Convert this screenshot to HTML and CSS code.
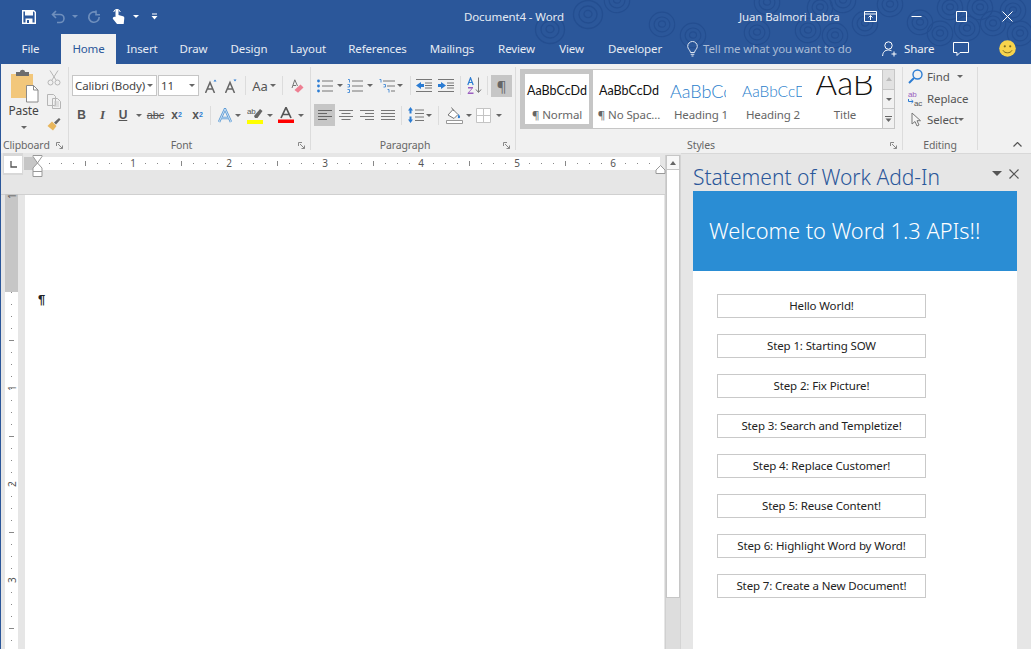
FILE: index.html
```html
<!DOCTYPE html>
<html lang="en">
<head>
    <meta charset="UTF-8">
    <title>Document4 - Word</title>
    <link rel="stylesheet" href="styles.css">
</head>
<body>
<svg width="0" height="0" class="defs">
    <symbol id="rings" viewBox="-16 -16 32 32">
        <path d="M-4 0a4 3.6 0 1 0 8 0a4 3.6 0 1 0-8 0M-9 1a9 8.5 0 1 0 18-1a9 8.5 0 1 0-18 1M-14.500 0a14.500 14 0 1 0 29 1a14.500 14 0 1 0-29-1" fill="none" stroke="#244e90" stroke-width="1.300"/>
    </symbol>
</svg>
<header class="top">
    <svg class="pattern" width="1031" height="64">
        <use href="#rings" x="572" y="-2" width="32" height="32"/>
        <use href="#rings" x="534" y="13" width="32" height="32"/>
        <use href="#rings" x="648" y="10" width="28" height="28"/>
        <use href="#rings" x="679" y="21" width="28" height="28"/>
        <use href="#rings" x="743" y="18" width="28" height="28"/>
        <use href="#rings" x="603" y="-14" width="28" height="28"/>
        <use href="#rings" x="753" y="-12" width="28" height="28"/>
        <use href="#rings" x="794" y="16" width="28" height="28"/>
        <use href="#rings" x="821" y="21" width="28" height="28"/>
        <use href="#rings" x="806" y="-7" width="28" height="28"/>
        <use href="#rings" x="829" y="-14" width="28" height="28"/>
        <use href="#rings" x="851" y="9" width="28" height="28"/>
        <use href="#rings" x="906" y="8" width="28" height="28"/>
        <use href="#rings" x="926" y="19" width="28" height="28"/>
        <use href="#rings" x="953" y="14" width="28" height="28"/>
        <use href="#rings" x="979" y="9" width="28" height="28"/>
        <use href="#rings" x="999" y="-4" width="28" height="28"/>
        <use href="#rings" x="966" y="-7" width="28" height="28"/>
        <use href="#rings" x="936" y="-7" width="28" height="28"/>
        <use href="#rings" x="1006" y="19" width="28" height="28"/>
        <use href="#rings" x="876" y="-10" width="28" height="28"/>
    </svg>
    <div class="titlebar">
        <div class="qat">
            <svg class="save" width="14" height="14" viewBox="0 0 14 14"><path d="M.7.700h11l1.600 1.600v11H.7z" fill="none" stroke="#fff" stroke-width="1.400"/><path d="M3 1h8v4.500H3zM3.500 8.500h7V13h-7z" fill="#fff"/><path d="M5 10h2v3H5z" fill="#2b579a"/></svg>
            <svg class="undo" width="15" height="14" viewBox="0 0 15 14"><path d="M5 1 1.500 4.500 5 8M2 4.500h7a4 4 0 0 1 0 8H6" fill="none" stroke="#6f8fbd" stroke-width="1.600"/></svg>
            <i class="drop dim undo-drop"></i>
            <svg class="redo" width="14" height="14" viewBox="0 0 14 14"><path d="M9.500 2.500a5.200 5.200 0 1 0 2.700 4.500M9 .5v4.200h4" fill="none" stroke="#6f8fbd" stroke-width="1.600"/></svg>
            <svg class="touch" width="13" height="17" viewBox="0 0 13 17"><path d="M3.500 9V3a1.500 1.500 0 0 1 3 0v4l4.500 1.200c1 .3 1.400 1 1.300 2l-.6 5.800H5L1 11c-.9-1.300.8-2.700 2.500-2z" fill="#fff"/><path d="M1.700 4a3.400 3.400 0 0 1 6.600 0" fill="none" stroke="#fff"/></svg>
            <i class="drop light touch-drop"></i>
            <svg class="custom" width="7" height="7" viewBox="0 0 7 7"><path d="M1 .5h5v1H1zM.5 3h6L3.500 6.500z" fill="#fff"/></svg>
        </div>
        <div class="doc-title">Document4 - Word</div>
        <div class="user">Juan Balmori Labra</div>
        <div class="caption">
            <svg class="cap cap-display" width="13" height="11" viewBox="0 0 13 11"><path d="M.5.500h12v10H.5zM.5 3h12M6.500 9V4.500M4.500 6.500l2-2 2 2" fill="none" stroke="#fff"/></svg>
            <svg class="cap cap-min" width="11" height="11" viewBox="0 0 11 11"><path d="M.5 5.500h10" stroke="#fff"/></svg>
            <svg class="cap cap-max" width="11" height="11" viewBox="0 0 11 11"><path d="M.5.500h10v10H.5z" fill="none" stroke="#fff"/></svg>
            <svg class="cap cap-close" width="11" height="11" viewBox="0 0 11 11"><path d="M.5.500l10 10M10.500.500l-10 10" stroke="#fff"/></svg>
        </div>
    </div>
    <nav class="tabs">
        <span class="tab tab-file">File</span>
        <span class="tab tab-home">Home</span>
        <span class="tab tab-insert">Insert</span>
        <span class="tab tab-draw">Draw</span>
        <span class="tab tab-design">Design</span>
        <span class="tab tab-layout">Layout</span>
        <span class="tab tab-refs">References</span>
        <span class="tab tab-mail">Mailings</span>
        <span class="tab tab-review">Review</span>
        <span class="tab tab-view">View</span>
        <span class="tab tab-dev">Developer</span>
        <svg class="bulb" width="11" height="16" viewBox="0 0 11 16"><path d="M3.500 11.500C3.300 9 .7 8.200.7 5.300a4.800 4.800 0 0 1 9.600 0c0 2.900-2.600 3.700-2.800 6.200zM3.700 13.300h3.600M4.500 15h2" fill="none" stroke="#dfe6f1"/></svg>
        <span class="tell">Tell me what you want to do</span>
        <svg class="share-icon" width="16" height="16" viewBox="0 0 16 16"><circle cx="6.500" cy="4.500" r="3.700" fill="none" stroke="#fff"/><path d="M.6 15c.2-3.600 2-6 5.900-6 1.200 0 2.200.3 3 .8M12 10.500v5M9.500 13h5" fill="none" stroke="#fff"/></svg>
        <span class="share">Share</span>
        <svg class="comment" width="16" height="14" viewBox="0 0 16 14"><path d="M.5.500h15v10H7l-3 3v-3H.5z" fill="none" stroke="#fff"/></svg>
        <svg class="smiley" width="17" height="17" viewBox="0 0 17 17"><circle cx="8.500" cy="8.500" r="8.300" fill="#f7d44c"/><circle cx="5.800" cy="6.300" r="1.100" fill="#7a6a1e"/><circle cx="11.200" cy="6.300" r="1.100" fill="#7a6a1e"/><path d="M4 10.300c1.500 3.300 7.500 3.300 9 0" fill="none" stroke="#7a6a1e"/></svg>
    </nav>
</header>

<section class="ribbon">
    <div class="group g-clip">
        <div class="clip-body">
            <div class="paste">
                <svg width="29" height="34" viewBox="0 0 29 34"><path d="M1 5h22v24H1z" fill="#f2c77b"/><path d="M6 5V3h4c0-3 5-3 5 0h4v4H6z" fill="#6d6d6d"/><path d="M16.500 16.500h7l4.500 4.500v12H16.500z" fill="#fff" stroke="#8a8a8a"/><path d="M23.500 16.500V21H28" fill="none" stroke="#8a8a8a"/></svg>
                <span class="paste-label">Paste</span>
                <i class="drop"></i>
            </div>
            <div class="clip-small">
                <svg width="14" height="16" viewBox="0 0 14 16"><path d="M3 .5 9 10M11 .5 5 10" stroke="#b5b5b5" fill="none"/><circle cx="3.500" cy="12.500" r="2.500" fill="none" stroke="#b5b5b5"/><circle cx="10.500" cy="12.500" r="2.500" fill="none" stroke="#b5b5b5"/></svg>
                <svg width="14" height="15" viewBox="0 0 14 15"><path d="M.5.500h6l2 2v9h-8zM5.500 4.500h5l3 3v7h-8z" fill="#f1f1f1" stroke="#b5b5b5"/><path d="M7 8h5M7 10h5M7 12h5" stroke="#c9c9c9"/></svg>
                <svg width="14" height="14" viewBox="0 0 14 14"><path d="M.5 9 5 4.500l4.500 4.500L6 13.500z" fill="#e8b65b"/><path d="M7 5.500 12 1l1.500 1.500L9 7.500z" fill="#666"/></svg>
            </div>
        </div>
        <div class="glabel glabel-clip">Clipboard<svg class="launch" width="7" height="7" viewBox="0 0 7 7"><path d="M.5 4V.5H4M2 2l4.500 4.500M6.500 3.500v3h-3" fill="none" stroke="#888"/></svg></div>
    </div>

    <div class="group g-font">
        <div class="row">
            <div class="combo combo-font ml3"><span>Calibri (Body)</span><i class="drop"></i></div>
            <div class="combo combo-size ml1"><span>11</span><i class="drop"></i></div>
            <span class="t w20 ml2"><svg width="12" height="14" viewBox="0 0 12 14"><path d="M.5 14 5 3.500 9.500 14M2.300 10h5.400" fill="none" stroke="#666" stroke-width="1.500"/><path d="M8.500 2.500 10 .5l1.500 2z" fill="#2b7cd3"/></svg></span>
            <span class="t w20"><svg width="12" height="14" viewBox="0 0 12 14"><path d="M.5 14 5 3.500 9.500 14M2.300 10h5.400" fill="none" stroke="#666" stroke-width="1.500"/><path d="M8.500.5 10 2.500l1.500-2z" fill="#2b7cd3"/></svg></span>
            <span class="t w8"><i class="vsep"></i></span>
            <span class="t w20 ml1 aa">Aa</span>
            <span class="t w6"><i class="drop"></i></span>
            <span class="t w12"><i class="vsep"></i></span>
            <span class="t w18"><svg width="13" height="14" viewBox="0 0 13 14"><path d="M1 9 3.800.8 6.500 7M2 6.500h3" fill="none" stroke="#777"/><path d="M3.500 11 9.500 5.500l3 3L7 13.800z" fill="#ee7f92"/></svg></span>
        </div>
        <div class="row row2">
            <span class="t w21 ml2 fmt b">B</span>
            <span class="t w21 fmt i">I</span>
            <span class="t w20 fmt u">U</span>
            <span class="t w12"><i class="drop"></i></span>
            <span class="t w21 fmt abc">abc</span>
            <span class="t w21 fmt b">x<sub>2</sub></span>
            <span class="t w21 fmt b">x<sup>2</sup></span>
            <span class="t w4"><i class="vsep"></i></span>
            <span class="t w20 ml3"><svg width="14" height="15" viewBox="0 0 14 15"><path d="M1 14 7 1l6 13M3.500 10h7" fill="none" stroke="#5b9bd5" stroke-width="2.500"/><path d="M1 14 7 1l6 13M3.500 10h7" fill="none" stroke="#e4effa" stroke-width=".8"/></svg></span>
            <span class="t w6"><i class="drop"></i></span>
            <span class="t w20 ml4"><svg width="16" height="17" viewBox="0 0 16 17"><text x="0" y="7" class="hl-ab">ab</text><path d="M7 9 13 2l2.500 2-5 7H8z" fill="#666"/><path d="M0 13h16v4H0z" fill="#ffff00"/></svg></span>
            <span class="t w10"><i class="drop"></i></span>
            <span class="t w20 ml1"><svg width="16" height="16" viewBox="0 0 16 16"><path d="M3 11 8 .5 13 11M5 7.500h6" fill="none" stroke="#555" stroke-width="1.700"/><path d="M0 12.500h16V16H0z" fill="#f00"/></svg></span>
            <span class="t w10"><i class="drop"></i></span>
        </div>
        <div class="glabel glabel-off">Font<svg class="launch" width="7" height="7" viewBox="0 0 7 7"><path d="M.5 4V.5H4M2 2l4.500 4.500M6.500 3.500v3h-3" fill="none" stroke="#888"/></svg></div>
    </div>

    <div class="group g-para">
        <div class="row">
            <span class="t w18 ml5"><svg width="16" height="14" viewBox="0 0 16 14"><path d="M5 2h11M5 7h11M5 12h11" stroke="#777"/><circle cx="1.500" cy="2" r="1.400" fill="#2b7cd3"/><circle cx="1.500" cy="7" r="1.400" fill="#2b7cd3"/><circle cx="1.500" cy="12" r="1.400" fill="#2b7cd3"/></svg></span>
            <span class="t w12"><i class="drop"></i></span>
            <span class="t w16 ml1"><svg width="16" height="14" viewBox="0 0 16 14"><path d="M5 2h11M5 7h11M5 12h11" stroke="#777"/><path d="M1 .5h1.500v3M.5 5.500h2V8h-2M.5 10.500h2v3h-2" fill="none" stroke="#2b7cd3" stroke-width=".8"/></svg></span>
            <span class="t w14"><i class="drop"></i></span>
            <span class="t w18 ml1"><svg width="16" height="14" viewBox="0 0 16 14"><path d="M4 2h12M8 7h8M12 12h4" stroke="#777"/><path d="M.5.500h1.500v3M4.500 5.500h2V8h-2M8.500 10.500h1.500v3" fill="none" stroke="#2b7cd3" stroke-width=".8"/></svg></span>
            <span class="t w8"><i class="drop"></i></span>
            <span class="t w10 ml1"><i class="vsep"></i></span>
            <span class="t w18"><svg width="16" height="13" viewBox="0 0 16 13"><path d="M0 .5h16M9 4h7M9 6.500h7M9 9h7M0 12.500h16" stroke="#777"/><path d="M0 6.500 5 3v2h3v3H5v2z" fill="#2b7cd3"/></svg></span>
            <span class="t w18 ml4"><svg width="16" height="13" viewBox="0 0 16 13"><path d="M0 .5h16M9 4h7M9 6.500h7M9 9h7M0 12.500h16" stroke="#777"/><path d="M8 6.500 3 3v2H0v3h3v2z" fill="#2b7cd3"/></svg></span>
            <span class="t w10"><i class="vsep"></i></span>
            <span class="t w18"><svg width="15" height="17" viewBox="0 0 15 17"><path d="M.8 8 3.500.8 6.200 8M1.800 5.500h3.400" fill="none" stroke="#2b7cd3" stroke-width="1.200"/><path d="M1 10h5v1L2 15.500h4.500V17H.7v-1l4-4.500H1z" fill="#9b5fc0"/><path d="M11.500.5V15M9 12.500l2.500 3 2.500-3" fill="none" stroke="#777"/></svg></span>
            <span class="t w8"><i class="vsep"></i></span>
            <span class="t w21 on pil">¶</span>
        </div>
        <div class="row row2">
            <span class="t w21 ml3 on"><svg width="14" height="10" viewBox="0 0 14 10"><path d="M0 .5h14M0 3.500h9M0 6.500h14M0 9.500h9" stroke="#666"/></svg></span>
            <span class="t w21"><svg width="14" height="10" viewBox="0 0 14 10"><path d="M0 .5h14M2.500 3.500h9M0 6.500h14M2.500 9.500h9" stroke="#777"/></svg></span>
            <span class="t w21"><svg width="14" height="10" viewBox="0 0 14 10"><path d="M0 .5h14M5 3.500h9M0 6.500h14M5 9.500h9" stroke="#777"/></svg></span>
            <span class="t w21"><svg width="14" height="11" viewBox="0 0 14 11"><path d="M0 .5h14M0 3.500h14M0 6.500h14M0 9.500h14" stroke="#777"/></svg></span>
            <span class="t w6"><i class="vsep"></i></span>
            <span class="t w20 ml2"><svg width="16" height="16" viewBox="0 0 16 16"><path d="M7 3h9M7 6.500h9M7 10h9M7 13.500h9" stroke="#777"/><path d="M2.500 0 5 3.500H3.500v3h-2v-3H0zM2.500 16 0 12.500h1.500v-3h2v3H5z" fill="#2b7cd3"/></svg></span>
            <span class="t w6"><i class="drop"></i></span>
            <span class="t w12"><i class="vsep"></i></span>
            <span class="t w20"><svg width="17" height="17" viewBox="0 0 17 17"><path d="M2 8 7 2.500l5 5-4 4z" fill="#fff" stroke="#777"/><path d="M5.500.5 8 4" stroke="#777"/><path d="M12.500 7c1 1.500 2 2.500 1.500 3.500s-2 .8-2.200-.2z" fill="#2b7cd3"/><path d="M.5 13.500h16v3H.5z" fill="#fff" stroke="#999"/></svg></span>
            <span class="t w10"><i class="drop"></i></span>
            <span class="t w18"><svg width="15" height="15" viewBox="0 0 15 15"><path d="M.5.500h14v14H.5zM7.500.500v14M.5 7.500h14" fill="#fff" stroke="#c4c4c4"/></svg></span>
            <span class="t w14"><i class="drop"></i></span>
        </div>
        <div class="glabel glabel-off">Paragraph<svg class="launch" width="7" height="7" viewBox="0 0 7 7"><path d="M.5 4V.5H4M2 2l4.500 4.500M6.500 3.500v3h-3" fill="none" stroke="#888"/></svg></div>
    </div>

    <div class="group g-styles">
        <div class="gallery">
            <div class="style-list">
                <div class="style selected"><span class="sample cal">AaBbCcDd</span><span class="style-name">¶ Normal</span></div>
                <div class="style"><span class="sample cal">AaBbCcDd</span><span class="style-name">¶ No Spac...</span></div>
                <div class="style"><span class="sample h1">AaBbCc</span><span class="style-name">Heading 1</span></div>
                <div class="style"><span class="sample h2">AaBbCcD</span><span class="style-name">Heading 2</span></div>
                <div class="style"><span class="sample ttl">AaB</span><span class="style-name">Title</span></div>
            </div>
            <div class="gallery-btns">
                <span class="gbtn gbtn-up"><i class="drop up"></i></span>
                <span class="gbtn"><i class="drop"></i></span>
                <span class="gbtn gbtn-more"><svg width="7" height="6" viewBox="0 0 7 6"><path d="M0 .5h7" stroke="#666"/><path d="M.5 2.500h6L3.500 6z" fill="#666"/></svg></span>
            </div>
        </div>
        <div class="glabel glabel-off">Styles<svg class="launch" width="7" height="7" viewBox="0 0 7 7"><path d="M.5 4V.5H4M2 2l4.500 4.500M6.500 3.500v3h-3" fill="none" stroke="#888"/></svg></div>
    </div>

    <div class="group g-edit">
        <div class="edit-list">
            <div class="edit-row"><svg width="15" height="15" viewBox="0 0 15 15"><circle cx="9.500" cy="5.500" r="4.500" fill="none" stroke="#2b7cd3" stroke-width="1.400"/><path d="M6 9 1 14" stroke="#2b7cd3" stroke-width="2"/></svg><span>Find</span><i class="drop edit-find-drop"></i></div>
            <div class="edit-row"><svg width="15" height="17" viewBox="0 0 15 17"><text x="0" y="7" class="ab">ab</text><text x="6" y="16" class="ac">ac</text><path d="M.5 9v2.500H5M3.500 10 5.200 11.500 3.500 13" fill="none" stroke="#2b7cd3"/></svg><span>Replace</span></div>
            <div class="edit-row"><svg width="15" height="15" viewBox="0 0 15 15"><path d="M4 1v11l3-2.500 2 4.500 2-1-2-4.300h3.500z" fill="#f4f4f4" stroke="#777"/></svg><span>Select</span><i class="drop edit-sel-drop"></i></div>
        </div>
        <div class="glabel">Editing</div>
    </div>
    <svg class="collapse" width="9" height="5" viewBox="0 0 9 5"><path d="M.5 4.500l4-4 4 4" fill="none" stroke="#555" stroke-width="1.200"/></svg>
</section>

<main class="workspace">
    <div class="doc-col">
        <div class="hruler-row">
            <div class="tab-stop"><svg width="7" height="7" viewBox="0 0 7 7"><path d="M1 0v6h6" fill="none" stroke="#555" stroke-width="1.300"/></svg></div>
            <div class="hruler">
                <span class="rn">1</span><span class="rn">2</span><span class="rn">3</span><span class="rn">4</span><span class="rn">5</span><span class="rn">6</span>
                <svg class="indent-left" width="11" height="22" viewBox="0 0 11 22"><path d="M1 .5h9v1L5.500 8 1 1.500zM5.500 8 10 13v3.500H1V13zM1 16.500v5h9v-5" fill="#fff" stroke="#999"/></svg>
                <svg class="indent-right" width="11" height="9" viewBox="0 0 11 9"><path d="M5.500.5 10 5v3.500H1V5z" fill="#fff" stroke="#999"/></svg>
            </div>
        </div>
        <div class="doc-body">
            <div class="vruler">
                <div class="vnums">
                    <span class="vn">1</span><span class="vn"></span><span class="vn">1</span><span class="vn">2</span><span class="vn">3</span>
                </div>
            </div>
            <div class="page"><span class="pilcrow">¶</span></div>
        </div>
    </div>
    <div class="vscroll">
        <div class="vs-up"><i class="drop up"></i></div>
        <div class="vs-thumb"></div>
    </div>
    <aside class="pane">
        <div class="pane-head">
            <h1 class="pane-title">Statement of Work Add-In</h1>
            <i class="pane-menu"></i>
            <svg class="pane-close" width="10" height="10" viewBox="0 0 10 10"><path d="M.5.500l9 9M9.500.500l-9 9" stroke="#555" stroke-width="1.200"/></svg>
        </div>
        <div class="pane-frame">
            <div class="hero">Welcome to Word 1.3 APIs!!</div>
            <div class="actions">
                <button class="action">Hello World!</button>
                <button class="action">Step 1: Starting SOW</button>
                <button class="action">Step 2: Fix Picture!</button>
                <button class="action">Step 3: Search and Templetize!</button>
                <button class="action">Step 4: Replace Customer!</button>
                <button class="action">Step 5: Reuse Content!</button>
                <button class="action">Step 6: Highlight Word by Word!</button>
                <button class="action">Step 7: Create a New Document!</button>
            </div>
        </div>
    </aside>
</main>
</body>
</html>
```

FILE: styles.css
```css
* {
    box-sizing: border-box;
}
html, body {
    margin: 0;
    height: 100%;
}
body {
    width: 1031px;
    height: 649px;
    overflow: hidden;
    display: flex;
    flex-direction: column;
    font-family: "Noto Sans", "Open Sans", sans-serif;
    font-size: 11.5px;
    letter-spacing: -.12px;
    color: #444;
    background: #e6e6e6;
}
.defs {
    position: absolute;
}
i {
    display: block;
}

/* title bar and tabs */
.top {
    position: relative;
    height: 64px;
    flex: none;
    background: #2b579a;
    color: #fff;
}
.pattern {
    position: absolute;
    left: 0;
    top: 0;
}
.titlebar {
    position: relative;
    height: 33px;
    display: flex;
    align-items: center;
}
.qat {
    width: 464px;
    display: flex;
    align-items: center;
    flex: none;
}
.save { margin-left: 22px; }
.undo { margin-left: 15px; }
.undo-drop { margin-left: 6px; }
.redo { margin-left: 9px; }
.touch { margin-left: 11px; }
.touch-drop { margin-left: 8px; }
.custom { margin-left: 12px; }
.doc-title {
    width: 275px;
    flex: none;
    color: #e4eaf3;
}
.user {
    width: 125px;
    flex: none;
    color: #e4eaf3;
}
.caption {
    display: flex;
    align-items: center;
}
.cap-min { margin-left: 34px; }
.cap-max { margin-left: 34px; }
.cap-close { margin-left: 35px; }
.tabs {
    position: relative;
    height: 31px;
    display: flex;
    align-items: center;
}
.tab {
    height: 30px;
    margin-top: 1px;
    padding-bottom: 1px;
    display: flex;
    align-items: center;
    justify-content: center;
    color: #e7ecf4;
    flex: none;
}
.tab-file { width: 61px; }
.tab-home { width: 55px; background: #f1f1f1; color: #2b579a; }
.tab-insert { width: 52px; }
.tab-draw { width: 51px; }
.tab-design { width: 60px; }
.tab-layout { width: 58px; }
.tab-refs { width: 81px; }
.tab-mail { width: 68px; }
.tab-review { width: 61px; }
.tab-view { width: 49px; }
.tab-dev { width: 78px; }
.bulb { margin-left: 13px; flex: none; }
.tell { margin-left: 5px; width: 179px; color: #aabcd6; flex: none; }
.share-icon { flex: none; }
.share { margin-left: 6px; color: #eef1f6; }
.comment { margin-left: 19px; flex: none; }
.smiley { margin-left: 30px; flex: none; }

/* ribbon */
.ribbon {
    position: relative;
    height: 89px;
    flex: none;
    display: flex;
    padding-top: 3px;
    padding-bottom: 3px;
    background: #f1f1f1;
    border-left: 1px solid #2b579a;
}
.group {
    display: flex;
    flex-direction: column;
    border-right: 1px solid #dcdcdc;
    padding-top: 8px;
    flex: none;
}
.g-clip { width: 68px; }
.g-font { width: 242px; }
.g-para { width: 205px; }
.g-styles { width: 387px; }
.g-edit { width: 75px; }
.glabel {
    position: relative;
    margin-top: auto;
    margin-bottom: -3px;
    height: 16px;
    line-height: 16px;
    text-align: center;
    font-size: 10.5px;
    color: #666;
}
.glabel-clip {
    text-align: left;
    padding-left: 2px;
}
.glabel-off {
    padding-right: 16px;
}
.launch {
    position: absolute;
    right: 5px;
    top: 5px;
}
.row {
    display: flex;
    height: 21px;
    align-items: center;
}
.row2 {
    height: 22px;
    margin-top: 8px;
}
.t {
    display: flex;
    align-items: center;
    justify-content: center;
    height: 100%;
    flex: none;
}
.w4 { width: 4px; }
.w6 { width: 6px; }
.w8 { width: 8px; }
.w10 { width: 10px; }
.w12 { width: 12px; }
.w14 { width: 14px; }
.w16 { width: 16px; }
.w18 { width: 18px; }
.w20 { width: 20px; }
.w21 { width: 21px; }
.ml1 { margin-left: 1px; }
.ml2 { margin-left: 2px; }
.ml3 { margin-left: 3px; }
.ml4 { margin-left: 4px; }
.ml5 { margin-left: 5px; }
.on { background: #c6c6c6; }
.vsep {
    width: 1px;
    height: 19px;
    background: #dcdcdc;
}
.drop {
    width: 0;
    height: 0;
    border-left: 3px solid transparent;
    border-right: 3px solid transparent;
    border-top: 3px solid #666;
    flex: none;
}
.drop.up {
    border-top: 0;
    border-bottom: 4px solid #666;
}
.drop.dim { border-top-color: #6f8fbd; }
.drop.light { border-top-color: #fff; }
.combo {
    height: 21px;
    background: #fff;
    border: 1px solid #c6c6c6;
    display: flex;
    align-items: center;
    justify-content: space-between;
    padding: 0 3px 0 2px;
    flex: none;
    overflow: hidden;
    white-space: nowrap;
}
.combo-font { width: 85px; }
.combo-font span { width: 72px; overflow: hidden; }
.combo-size { width: 41px; }
.aa { font-size: 13px; color: #555; }
.fmt { color: #555; font-family: "Liberation Sans", sans-serif; font-size: 12px; }
.fmt sub, .fmt sup { font-size: 7px; color: #2b7cd3; line-height: 0; }
.b { font-weight: bold; }
.i { font-style: italic; font-family: "Liberation Serif", serif; font-size: 13px; font-weight: bold; }
.u { font-weight: bold; text-decoration: underline; }
.abc { text-decoration: line-through; font-size: 11px; }
.pil { color: #666; font-size: 15px; height: 22px; margin-top: 1px; }
.hl-ab { font: 8px "Liberation Sans", sans-serif; fill: #555; }

/* clipboard */
.clip-body {
    display: flex;
    margin-top: -6px;
}
.paste {
    width: 44px;
    display: flex;
    flex-direction: column;
    align-items: center;
    padding-left: 3px;
}
.paste-label {
    font-size: 12px;
    line-height: 14px;
    margin-top: 1px;
    margin-left: -2px;
}
.paste .drop {
    margin-top: 8px;
    margin-left: -2px;
}
.clip-small {
    width: 22px;
    margin-left: -4px;
    display: flex;
    flex-direction: column;
    align-items: center;
    gap: 8px;
    padding-left: 3px;
    padding-top: 1px;
}

/* styles gallery */
.gallery {
    width: 375px;
    height: 60px;
    margin-top: -6px;
    margin-left: 4px;
    display: flex;
    background: #fff;
    border: 1px solid #c6c6c6;
}
.style-list {
    width: 361px;
    display: flex;
    flex: none;
    overflow: hidden;
}
.style {
    width: 72px;
    flex: none;
    height: 58px;
    display: flex;
    flex-direction: column;
    align-items: center;
    padding-top: 8px;
    overflow: hidden;
}
.style.selected {
    border: 4px solid #c6c6c6;
    padding-top: 4px;
    width: 72px;
}
.sample {
    height: 26px;
    line-height: 26px;
    font-family: Lato, sans-serif;
    color: #111;
    white-space: nowrap;
    overflow: hidden;
    display: block;
    width: 64px;
    text-align: center;
    letter-spacing: 0;
}
.cal { font-size: 12.5px; }
.h1 { font-size: 18px; font-weight: 300; color: #2a80cc; text-align: left; width: 56px; margin-right: 6px; }
.h2 { font-size: 15.5px; font-weight: 300; color: #2a80cc; text-align: left; width: 60px; margin-right: 2px; }
.ttl { font-size: 33px; font-weight: 300; width: 62px; text-align: left; margin-left: 3px; height: 22px; line-height: 12px; margin-top: -2px; margin-bottom: 6px; }
.style-name {
    margin-top: 4px;
    color: #666;
    line-height: 14px;
    white-space: nowrap;
}
.gallery-btns {
    flex: 1;
    display: flex;
    flex-direction: column;
    border-left: 1px solid #c6c6c6;
}
.gbtn {
    flex: 1;
    display: flex;
    align-items: center;
    justify-content: center;
    background: #f1f1f1;
    border-bottom: 1px solid #c6c6c6;
}
.gbtn-up { background: #e2e2e2; }
.gbtn-up .drop { border-bottom-color: #bbb; }
.gbtn-more { border-bottom: 0; }

/* editing */
.edit-list {
    margin-top: -9px;
}
.edit-row {
    position: relative;
    height: 21.500px;
    display: flex;
    align-items: center;
    padding-left: 5px;
    gap: 4px;
    color: #555;
}
.edit-row svg {
    flex: none;
}
.ab, .ac {
    font: 8px "Liberation Sans", sans-serif;
}
.ab { fill: #9b5fc0; }
.ac { fill: #555; }
.edit-find-drop { margin-left: 3px; }
.edit-sel-drop { margin-left: -4px; }
.collapse {
    position: absolute;
    right: 9px;
    top: 78px;
}

/* document */
.workspace {
    flex: 1;
    min-height: 0;
    display: flex;
    border-left: 1px solid #2b579a;
}
.doc-col {
    width: 664px;
    flex: none;
    display: flex;
    flex-direction: column;
}
.hruler-row {
    height: 42px;
    flex: none;
    display: flex;
    border-bottom: 1px solid #d0d0d0;
}
.tab-stop {
    width: 20px;
    height: 22px;
    margin-left: 2px;
    flex: none;
    background: #fff;
    border: 1px solid #d8d8d8;
    border-top-width: 3px;
    border-bottom-width: 2px;
    display: flex;
    align-items: center;
    justify-content: center;
}
.hruler {
    position: relative;
    width: 636px;
    margin-left: 1px;
    height: 13px;
    margin-top: 4px;
    display: flex;
    padding-left: 61px;
    font-size: 10px;
    line-height: 13px;
    color: #555;
    background-color: #fff;
    background-image:
        linear-gradient(#c6c6c6, #c6c6c6),
        linear-gradient(90deg, #888 1px, transparent 1px),
        linear-gradient(90deg, #888 1px, transparent 1px);
    background-size: 13px 13px, 12px 1px, 96px 5px;
    background-position: 0 0, 1px 6px, 61px 4px;
    background-repeat: no-repeat, repeat-x, repeat-x;
}
.rn {
    width: 96px;
    flex: none;
    display: flex;
    justify-content: center;
    background: radial-gradient(circle, #fff 6px, transparent 6px);
}
.indent-left {
    position: absolute;
    left: 8px;
    top: -2px;
}
.indent-right {
    position: absolute;
    left: 631px;
    top: 8px;
}
.doc-body {
    flex: 1;
    min-height: 0;
    display: flex;
}
.vruler {
    width: 13px;
    margin-left: 4px;
    margin-top: -1px;
    flex: none;
    overflow: hidden;
    background-color: #fff;
    background-image:
        linear-gradient(#c6c6c6, #c6c6c6),
        linear-gradient(#888 1px, transparent 1px),
        linear-gradient(#888 1px, transparent 1px);
    background-size: 13px 98px, 1px 12px, 5px 96px;
    background-position: 0 0, 6px 2px, 4px 50px;
    background-repeat: no-repeat, repeat-y, repeat-y;
}
.vnums {
    margin-top: -46px;
    display: flex;
    flex-direction: column;
}
.vn {
    height: 96px;
    flex: none;
    display: flex;
    align-items: center;
    justify-content: center;
    font-size: 10px;
    color: #555;
    writing-mode: vertical-rl;
    transform: rotate(180deg);
}
.page {
    width: 639px;
    margin-left: 7px;
    background: #fff;
    padding: 98px 0 0 13px;
    flex: none;
}
.pilcrow {
    font: bold 13px "Liberation Sans", sans-serif;
    color: #222;
    line-height: 14px;
    display: block;
}
.vscroll {
    width: 16px;
    flex: none;
    border-right: 1px solid #d4d4d4;
    border-left: 1px solid #d0d0d0;
    display: flex;
    flex-direction: column;
    margin-top: 2px;
    background: #dddddd;
}
.vs-up {
    height: 15px;
    background: #f8f8f8;
    border: 1px solid #c6c6c6;
    display: flex;
    align-items: center;
    justify-content: center;
}
.vs-thumb {
    height: 428px;
    background: #fff;
    border: 1px solid #c6c6c6;
    border-top: 0;
}

/* task pane */
.pane {
    flex: 1;
    padding-left: 12px;
    padding-right: 14px;
    display: flex;
    flex-direction: column;
    border-top: 1px solid #d8d8d8;
}
.pane-head {
    position: relative;
    height: 37px;
    flex: none;
}
.pane-title {
    margin: 0;
    font-size: 21px;
    letter-spacing: 0;
    line-height: 28px;
    padding-top: 9px;
    font-weight: 300;
    color: #2b579a;
    white-space: nowrap;
}
.pane-menu {
    position: absolute;
    right: 15px;
    top: 17px;
    width: 0;
    border-left: 5px solid transparent;
    border-right: 5px solid transparent;
    border-top: 5px solid #555;
}
.pane-close {
    position: absolute;
    right: -2px;
    top: 15px;
}
.pane-frame {
    flex: 1;
    background: #fff;
    display: flex;
    flex-direction: column;
}
.hero {
    height: 80px;
    background: #2a8dd4;
    color: #fff;
    font-size: 21.8px;
    letter-spacing: 0;
    font-weight: 300;
    line-height: 80px;
    padding-left: 16px;
    white-space: nowrap;
}
.actions {
    display: flex;
    flex-direction: column;
    gap: 16px;
    padding: 23px 0 0 24px;
}
.action {
    width: 209px;
    height: 24px;
    padding: 0 0 1px;
    background: #fff;
    border: 1px solid #c9c9c9;
    font: 11.5px "Noto Sans", sans-serif;
    letter-spacing: -.13px;
    color: #222;
    text-align: center;
}
```
